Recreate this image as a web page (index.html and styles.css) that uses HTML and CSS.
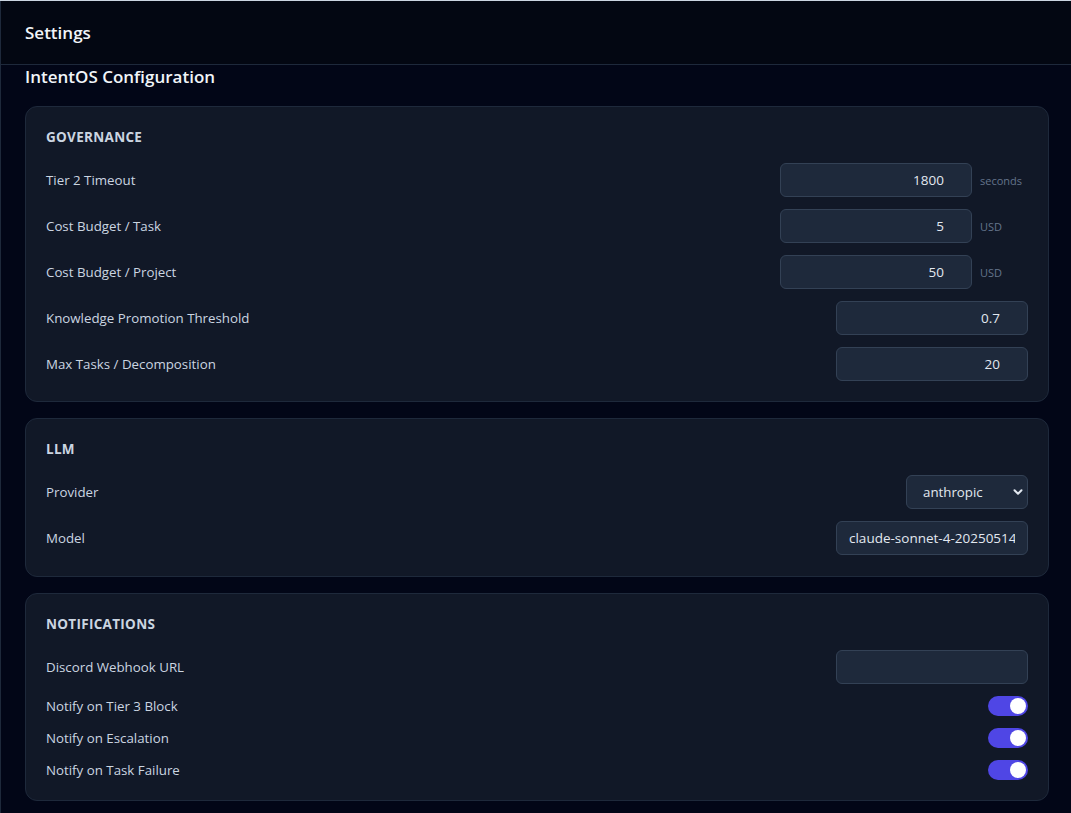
FILE: index.html
```html
<!DOCTYPE html>
<html lang="en">
<head>
  <meta charset="UTF-8" />
  <meta name="viewport" content="width=device-width, initial-scale=1" />
  <title>Settings</title>
  <link rel="stylesheet" href="styles.css">
</head>
<body>
  <div class="app">
    <header class="topbar">
      <h1>Settings</h1>
    </header>

    <main class="content">
      <h2 class="page-title">IntentOS Configuration</h2>

      <section class="card">
        <h3 class="card-title">Governance</h3>
        <div class="row">
          <label>Tier 2 Timeout</label>
          <div class="field">
            <input type="text" class="num" value="1800" />
            <span class="unit">seconds</span>
          </div>
        </div>
        <div class="row">
          <label>Cost Budget / Task</label>
          <div class="field">
            <input type="text" class="num" value="5" />
            <span class="unit">USD</span>
          </div>
        </div>
        <div class="row">
          <label>Cost Budget / Project</label>
          <div class="field">
            <input type="text" class="num" value="50" />
            <span class="unit">USD</span>
          </div>
        </div>
        <div class="row">
          <label>Knowledge Promotion Threshold</label>
          <div class="field">
            <input type="text" class="num" value="0.7" />
          </div>
        </div>
        <div class="row">
          <label>Max Tasks / Decomposition</label>
          <div class="field">
            <input type="text" class="num" value="20" />
          </div>
        </div>
      </section>

      <section class="card card-llm">
        <h3 class="card-title">LLM</h3>
        <div class="row">
          <label>Provider</label>
          <div class="field">
            <div class="select">
              <span>anthropic</span>
              <svg width="10" height="10" viewBox="0 0 10 10"><path d="M1.5 3.2 L5 6.7 L8.5 3.2" fill="none" stroke="#e2e8f0" stroke-width="2" stroke-linecap="round" stroke-linejoin="round"/></svg>
            </div>
          </div>
        </div>
        <div class="row">
          <label>Model</label>
          <div class="field">
            <input type="text" value="claude-sonnet-4-20250514" />
          </div>
        </div>
      </section>

      <section class="card">
        <h3 class="card-title">Notifications</h3>
        <div class="row">
          <label>Discord Webhook URL</label>
          <div class="field">
            <input type="text" value="" />
          </div>
        </div>
        <div class="row toggle-row">
          <label>Notify on Tier 3 Block</label>
          <span class="toggle on"></span>
        </div>
        <div class="row toggle-row">
          <label>Notify on Escalation</label>
          <span class="toggle on"></span>
        </div>
        <div class="row toggle-row">
          <label>Notify on Task Failure</label>
          <span class="toggle on"></span>
        </div>
      </section>
    </main>
  </div>
</body>
</html>
```

FILE: styles.css
```css
* {
  box-sizing: border-box;
}
body {
  margin: 0;
  background-color: #020617;
  color: #e2e8f0;
  font-family: "Open Sans", "Noto Sans", Arial, sans-serif;
  border-top: 1px solid #cbd5e1;
}
.app {
  min-height: 812px;
  border-left: 1px solid #1e293b;
}
.topbar {
  height: 64px;
  display: flex;
  align-items: center;
  padding: 0 24px;
  border-bottom: 1px solid #1e293b;
  background: #030712;
}
.topbar h1 {
  margin: 0;
  font-size: 17px;
  font-weight: 600;
  color: #f1f5f9;
}
.content {
  padding: 0 22px 0 24px;
}
.page-title {
  margin: 0;
  height: 41px;
  font-size: 17px;
  font-weight: 600;
  color: #f1f5f9;
}
.card {
  background: #111827;
  border: 1px solid #1e293b;
  border-radius: 12px;
  padding: 19px 20px 20px 20px;
  margin-bottom: 16px;
  display: flex;
  flex-direction: column;
  gap: 12px;
}
.card-llm {
  padding-bottom: 21px;
}
.card-title {
  margin: 0 0 3px 0;
  height: 22px;
  line-height: 22px;
  font-size: 13.5px;
  font-weight: 700;
  text-transform: uppercase;
  letter-spacing: 0.3px;
  color: #cbd5e1;
}
.row {
  display: flex;
  align-items: center;
  justify-content: space-between;
  height: 34px;
}
.row label {
  font-size: 13.3px;
  color: #cbd5e1;
}
.field {
  display: flex;
  align-items: center;
  gap: 8px;
}
.field input {
  width: 192px;
  height: 34px;
  background: #1e293b;
  border: 1px solid #334155;
  border-radius: 6px;
  color: #e2e8f0;
  font-family: inherit;
  font-size: 13.5px;
  padding: 0 12px;
  outline: none;
}
.field input.num {
  text-align: right;
  padding-right: 27px;
}
.unit {
  width: 48px;
  font-size: 11px;
  color: #64748b;
}
.select {
  width: 122px;
  height: 34px;
  display: flex;
  align-items: center;
  justify-content: space-between;
  padding: 0 4px 0 16px;
  background: #1e293b;
  border: 1px solid #334155;
  border-radius: 6px;
  font-size: 13.3px;
  color: #e2e8f0;
}
.toggle-row {
  height: 20px;
}
.toggle {
  position: relative;
  width: 40px;
  height: 20px;
  border-radius: 10px;
  background: #334155;
}
.toggle.on {
  background: #4f46e5;
}
.toggle::after {
  content: "";
  position: absolute;
  top: 2px;
  left: 2px;
  width: 16px;
  height: 16px;
  border-radius: 50%;
  background: #fff;
}
.toggle.on::after {
  left: 22px;
}
```
